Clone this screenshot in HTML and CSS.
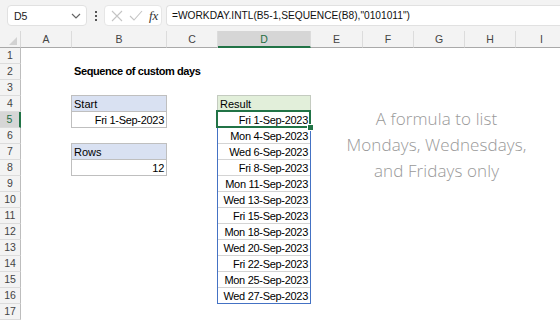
FILE: index.html
```html
<!DOCTYPE html>
<html>
<head>
  <meta charset="utf-8">
  <title>Sequence of custom days</title>
  <link rel="stylesheet" href="styles.css">
</head>
<body>

<div class="toolbar">
  <div class="namebox">
    <span>D5</span>
    <svg width="10" height="6" viewBox="0 0 10 6"><path d="M1 1 L5 5 L9 1" fill="none" stroke="#666" stroke-width="1.2"/></svg>
  </div>
  <div class="grip"><i></i><i></i><i></i></div>
  <div class="fx-buttons">
    <svg width="12" height="12" viewBox="0 0 12 12"><path d="M1 1 L11 11 M11 1 L1 11" stroke="#c4c4c4" stroke-width="1.1"/></svg>
    <svg width="14" height="12" viewBox="0 0 14 12"><path d="M1 6 L5 10 L13 1" fill="none" stroke="#c4c4c4" stroke-width="1.1"/></svg>
    <span class="fx">fx</span>
  </div>
  <div class="formula">=WORKDAY.INTL(B5-1,SEQUENCE(B8),"0101011")</div>
</div>

<div class="sheet">
  <div class="corner"><span></span></div>
  <div class="colhead">A</div>
  <div class="colhead">B</div>
  <div class="colhead">C</div>
  <div class="colhead active">D</div>
  <div class="colhead">E</div>
  <div class="colhead">F</div>
  <div class="colhead">G</div>
  <div class="colhead">H</div>
  <div class="colhead">I</div>

  <div class="rowhead">1</div>
  <div class="rowhead">2</div>
  <div class="rowhead">3</div>
  <div class="rowhead">4</div>
  <div class="rowhead active">5</div>
  <div class="rowhead">6</div>
  <div class="rowhead">7</div>
  <div class="rowhead">8</div>
  <div class="rowhead">9</div>
  <div class="rowhead">10</div>
  <div class="rowhead">11</div>
  <div class="rowhead">12</div>
  <div class="rowhead">13</div>
  <div class="rowhead">14</div>
  <div class="rowhead">15</div>
  <div class="rowhead">16</div>
  <div class="rowhead">17</div>

  <div class="title">Sequence of custom days</div>

  <div class="input-box start-box">
    <div class="label">Start</div>
    <div class="value">Fri 1-Sep-2023</div>
  </div>

  <div class="input-box rows-box">
    <div class="label">Rows</div>
    <div class="value">12</div>
  </div>

  <div class="result">
    <div class="result-label">Result</div>
    <div class="spill">
      <div class="value selected">Fri 1-Sep-2023</div>
      <div class="value">Mon 4-Sep-2023</div>
      <div class="value">Wed 6-Sep-2023</div>
      <div class="value">Fri 8-Sep-2023</div>
      <div class="value">Mon 11-Sep-2023</div>
      <div class="value">Wed 13-Sep-2023</div>
      <div class="value">Fri 15-Sep-2023</div>
      <div class="value">Mon 18-Sep-2023</div>
      <div class="value">Wed 20-Sep-2023</div>
      <div class="value">Fri 22-Sep-2023</div>
      <div class="value">Mon 25-Sep-2023</div>
      <div class="value">Wed 27-Sep-2023</div>
    </div>
  </div>

  <div class="note">A formula to list<br>Mondays, Wednesdays,<br>and Fridays only</div>
</div>

</body>
</html>
```

FILE: styles.css
```css
body {
  margin: 0;
  width: 560px;
  height: 320px;
  overflow: hidden;
  background: #fff;
  font-family: "Liberation Sans", Arial, sans-serif;
}

/* formula bar */
.toolbar {
  display: flex;
  align-items: center;
  height: 31px;
  padding-left: 7px;
  background: #f3f3f3;
  box-sizing: border-box;
}
.namebox {
  display: flex;
  align-items: center;
  justify-content: space-between;
  width: 80px;
  height: 21px;
  padding: 0 5px 0 6px;
  box-sizing: border-box;
  background: #fff;
  border: 1px solid #e1e1e1;
  border-radius: 4px;
  font-size: 10.5px;
  color: #222;
}
.grip {
  display: flex;
  flex-direction: column;
  gap: 2px;
  margin: 0 7px 0 8px;
}
.grip i {
  width: 2px;
  height: 2px;
  background: #555;
}
.fx-buttons {
  display: flex;
  align-items: center;
  gap: 6px;
  width: 58px;
  height: 21px;
  padding-left: 6px;
  box-sizing: border-box;
  background: #fff;
  border: 1px solid #e6e6e6;
  border-radius: 4px;
}
.fx {
  font-family: "Liberation Serif", serif;
  font-style: italic;
  font-size: 13px;
  color: #333;
}
.formula {
  flex: 1;
  height: 21px;
  margin-left: 4px;
  padding-left: 5px;
  box-sizing: border-box;
  background: #fff;
  border: 1px solid #e1e1e1;
  border-right: none;
  border-radius: 4px 0 0 4px;
  font-size: 10.2px;
  line-height: 19px;
  color: #111;
}

/* worksheet */
.sheet {
  display: grid;
  grid-template-columns: 21px 51px 95px 51px 93px 52px 51px 51px 51px 52px;
  grid-template-rows: 17px repeat(17, 16px);
  font-size: 11px;
}
.corner {
  grid-row: 1;
  grid-column: 1;
  position: relative;
  background: #f3f3f3;
  border-right: 1px solid #d8d8d8;
  border-bottom: 1px solid #a9a9a9;
}
.corner span {
  position: absolute;
  right: 3px;
  bottom: 2px;
  width: 0;
  height: 0;
  border-left: 8px solid transparent;
  border-bottom: 8px solid #d2d2d2;
}
.colhead {
  grid-row: 1;
  background: #f3f3f3;
  border-right: 1px solid #dcdcdc;
  border-bottom: 1px solid #a9a9a9;
  text-align: center;
  line-height: 17px;
  font-size: 10.5px;
  color: #444;
}
.colhead.active {
  background: #d6d6d6;
  color: #1f6e43;
  border-bottom: 2px solid #217346;
  line-height: 16px;
}
.rowhead {
  grid-column: 1;
  background: #f3f3f3;
  border-right: 1px solid #bdbdbd;
  border-bottom: 1px solid #dcdcdc;
  text-align: center;
  line-height: 15px;
  font-size: 10.5px;
  color: #444;
}
.rowhead.active {
  background: #d6d6d6;
  color: #1f6e43;
  border-right: 2px solid #217346;
}

.title {
  grid-row: 3;
  grid-column: 3 / span 3;
  padding-left: 2px;
  font-weight: bold;
  letter-spacing: -0.4px;
  line-height: 15px;
  color: #000;
}

.input-box {
  grid-column: 3;
  margin: -1px 0 0 -1px;
  border: 1px solid #bfbfbf;
  color: #000;
}
.start-box {
  grid-row: 5 / span 2;
}
.rows-box {
  grid-row: 8 / span 2;
}
.label {
  height: 16px;
  padding-left: 2px;
  box-sizing: border-box;
  border-bottom: 1px solid #bfbfbf;
  background: #d9e1f2;
  line-height: 16px;
}
.value {
  height: 15px;
  padding-right: 2px;
  text-align: right;
  letter-spacing: -0.3px;
  line-height: 16px;
  color: #000;
}

.result {
  grid-row: 5 / span 13;
  grid-column: 5;
  margin: -1px 0 0 -1px;
}
.result-label {
  height: 17px;
  padding-left: 2px;
  box-sizing: border-box;
  background: #e2efda;
  border: 1px solid #c4cbc0;
  line-height: 16px;
  color: #000;
}
.spill {
  border: 1px solid #4472c4;
  border-top: none;
}
.spill .value {
  height: 16px;
  box-sizing: border-box;
  border-bottom: 1px solid #d4d4d4;
}
.spill .value:last-child {
  height: 15px;
  border-bottom: none;
}
.selected {
  position: relative;
}
.selected::before {
  content: "";
  position: absolute;
  left: -2px;
  right: -1px;
  top: -2px;
  bottom: -1px;
  border: 2px solid #217346;
}
.selected::after {
  content: "";
  position: absolute;
  right: -4px;
  bottom: -4px;
  width: 5px;
  height: 5px;
  background: #217346;
  border: 1px solid #fff;
}

.note {
  grid-row: 6 / span 6;
  grid-column: 6 / span 5;
  margin-top: -6px;
  padding-right: 6px;
  text-align: center;
  font-family: "Open Sans", sans-serif;
  font-weight: 300;
  font-size: 17px;
  letter-spacing: 0.1px;
  line-height: 26px;
  color: #999;
}
```
